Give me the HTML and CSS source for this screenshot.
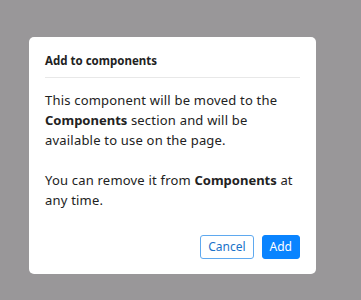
FILE: index.html
```html
<!DOCTYPE html>
<html>
<head>
<meta charset="utf-8">
<link rel="stylesheet" href="styles.css">
</head>
<body>
<div class="backdrop">
  <div class="dialog">
    <div class="dialog-header">
      <h2 class="dialog-title">Add to components</h2>
    </div>
    <div class="dialog-body">
      <p class="para">This component will be moved to the <strong>Components</strong> section and will be available to use on the page.</p>
      <p class="para">You can remove it from <strong>Components</strong> at any time.</p>
    </div>
    <div class="dialog-footer">
      <button class="btn btn-outline">Cancel</button>
      <button class="btn btn-primary">Add</button>
    </div>
  </div>
</div>
</body>
</html>
```

FILE: styles.css
```css
html, body {
  margin: 0;
  padding: 0;
}
body {
  background: #999799;
  font-family: "Noto Sans", "Open Sans", sans-serif;
  color: #222;
  width: 361px;
  height: 300px;
  overflow: hidden;
}
.backdrop {
  padding: 37px 0 0 29px;
}
.dialog {
  width: 287px;
  box-sizing: border-box;
  background: #fff;
  border-radius: 5px;
  padding: 0 16px 15px;
}
.dialog-header {
  padding-top: 16px;
  padding-bottom: 8px;
  border-bottom: 1px solid #e8e8e8;
}
.dialog-title {
  margin: 0;
  font-size: 11.5px;
  line-height: 16px;
  font-weight: 700;
  color: #222;
}
.dialog-body {
  padding-top: 12px;
  font-size: 13px;
  line-height: 20px;
  letter-spacing: 0.2px;
}
.para {
  margin: 0 0 20px;
}
.para:last-child {
  margin-bottom: 0;
}
.para strong {
  font-weight: 700;
  letter-spacing: 0;
}
.dialog-footer {
  display: flex;
  justify-content: flex-end;
  gap: 8px;
  margin-top: 25px;
}
.btn {
  height: 24px;
  box-sizing: border-box;
  border-radius: 3px;
  font-family: inherit;
  font-size: 12px;
  line-height: 20px;
  padding: 0 7px;
  cursor: pointer;
}
.btn-outline {
  background: #fff;
  border: 1px solid #5fa9ef;
  color: #1a73c9;
}
.btn-primary {
  background: #0a84ff;
  border: 1px solid #0a84ff;
  color: #fff;
}
```
